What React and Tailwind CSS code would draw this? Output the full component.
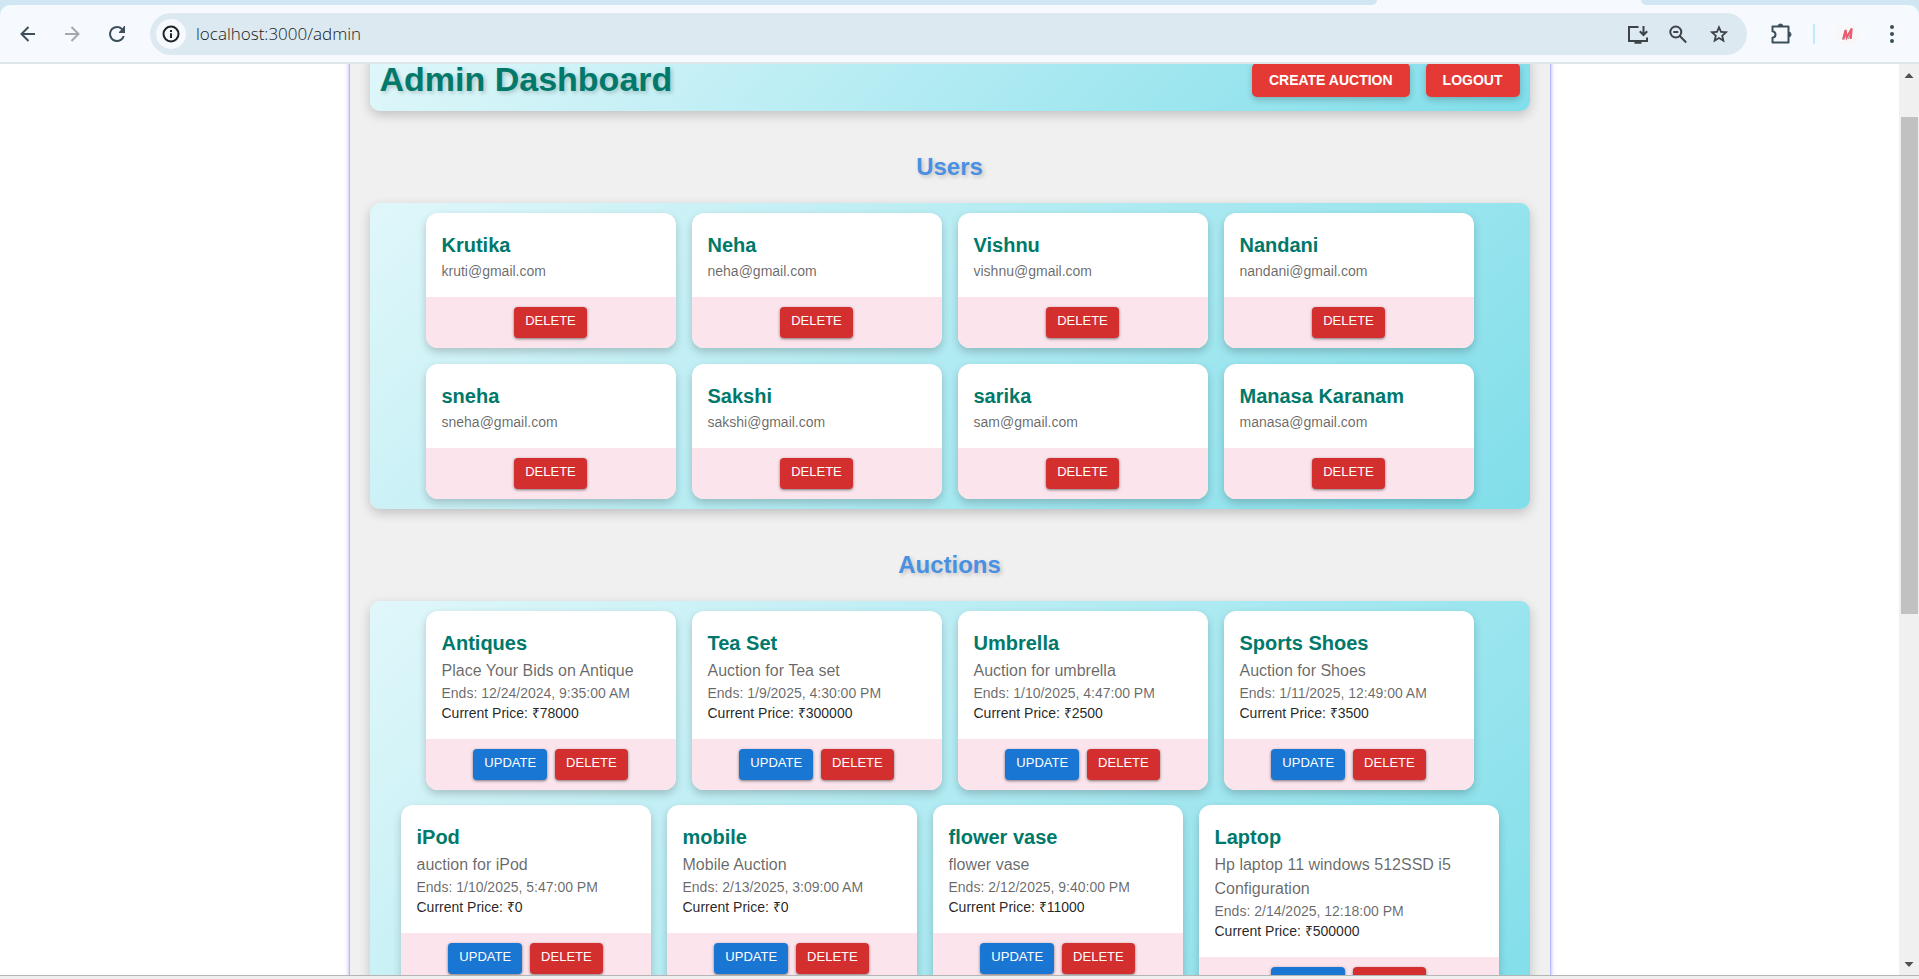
import React from "react";

const users = [
  ["Krutika", "kruti@gmail.com"],
  ["Neha", "neha@gmail.com"],
  ["Vishnu", "vishnu@gmail.com"],
  ["Nandani", "nandani@gmail.com"],
  ["sneha", "sneha@gmail.com"],
  ["Sakshi", "sakshi@gmail.com"],
  ["sarika", "sam@gmail.com"],
  ["Manasa Karanam", "manasa@gmail.com"],
];

const auctions = [
  ["Antiques", "Place Your Bids on Antique", "12/24/2024, 9:35:00 AM", 78000],
  ["Tea Set", "Auction for Tea set", "1/9/2025, 4:30:00 PM", 300000],
  ["Umbrella", "Auction for umbrella", "1/10/2025, 4:47:00 PM", 2500],
  ["Sports Shoes", "Auction for Shoes", "1/11/2025, 12:49:00 AM", 3500],
  ["iPod", "auction for iPod", "1/10/2025, 5:47:00 PM", 0],
  ["mobile", "Mobile Auction", "2/13/2025, 3:09:00 AM", 0],
  ["flower vase", "flower vase", "2/12/2025, 9:40:00 PM", 11000],
  ["Laptop", "Hp laptop 11 windows 512SSD i5 Configuration", "2/14/2025, 12:18:00 PM", 500000],
];

function IconButton({ label, className = "", children }) {
  return (
    <button type="button" aria-label={label} className={`flex shrink-0 items-center justify-center ${className}`}>
      {children}
    </button>
  );
}

function BrowserBar() {
  return (
    <header className="shrink-0 bg-[#d1e6f3]">
      <div className="flex h-[5px]">
        <div className="flex-1 bg-[#f6f9fe]">
          <div className="h-full rounded-br-[12px] bg-[#d1e6f3]" />
        </div>
        <div className="w-[264px] bg-[#f6f9fe]" />
        <div className="w-[278px] bg-[#f6f9fe]">
          <div className="h-full rounded-bl-[12px] bg-[#d1e6f3]" />
        </div>
      </div>
      <div className="flex h-[59px] items-center rounded-t-[10px] border-b-2 border-[#dde5ea] bg-[#f6f9fe] pb-1 pr-[15px] pt-1">
        <div className="flex w-[150px] items-center pl-4 text-[#3c4f5a]">
          <IconButton label="Back" className="size-6">
            <svg viewBox="0 0 24 24" className="size-6" fill="none" stroke="currentColor" strokeWidth="2">
              <path d="M19 12H6M12.500 5 5.500 12l7 7" />
            </svg>
          </IconButton>
          <IconButton label="Forward" className="ml-5 size-6 text-[#a3a8ad]">
            <svg viewBox="0 0 24 24" className="size-6" fill="none" stroke="currentColor" strokeWidth="2">
              <path d="M5 12h13M11.500 5l7 7-7 7" />
            </svg>
          </IconButton>
          <IconButton label="Reload" className="ml-[21px] size-6">
            <svg viewBox="0 0 24 24" className="size-6" fill="currentColor">
              <path d="M17.650 6.350A7.960 7.960 0 0 0 12 4a8 8 0 1 0 7.730 10h-2.080A6 6 0 1 1 12 6c1.660 0 3.140.69 4.220 1.780L14 10v1h6V4h-1z" />
            </svg>
          </IconButton>
        </div>
        <div className="flex h-[42px] flex-1 items-center rounded-full bg-[#dde9f1] pl-[6px] pr-4 text-[#3d4347]">
          <IconButton label="Site information" className="size-[30px] rounded-full bg-[#f6f9fe] text-[#1f2326]">
            <svg viewBox="0 0 20 20" className="size-5" fill="none" stroke="currentColor" strokeWidth="2">
              <circle cx="10" cy="10" r="7.500" />
              <path d="M10 9.300v4.700M10 6v2" />
            </svg>
          </IconButton>
          <input
            aria-label="Address"
            defaultValue="localhost:3000/admin"
            className="ml-[10px] min-w-0 flex-1 bg-transparent font-['Open_Sans',sans-serif] text-[17px] font-light text-[#16191c] outline-none"
          />
          <IconButton label="Install app" className="size-6">
            <svg viewBox="0 0 24 24" className="size-6" fill="none" stroke="currentColor" strokeWidth="2">
              <path d="M12.500 5H3v14h18v-3.500M17.500 4v8.500M13.800 9.300l3.700 3.700 3.700-3.700" strokeLinejoin="miter" />
              <path d="M8.500 20.500h7" strokeWidth="2.500" />
            </svg>
          </IconButton>
          <IconButton label="Zoom" className="ml-4 size-6">
            <svg viewBox="0 0 24 24" className="size-6" fill="none" stroke="currentColor" strokeWidth="2">
              <circle cx="9.800" cy="10" r="5.500" />
              <path d="M13.800 14l6.400 6.500M7.300 10h5" />
            </svg>
          </IconButton>
          <IconButton label="Bookmark" className="ml-[17px] size-6">
            <svg viewBox="0 0 24 24" className="size-6" fill="currentColor">
              <path d="M21.200 9.600l-6.600-.6L12 3 9.400 9l-6.600.6 5 4.300L6.300 20.500 12 17l5.700 3.500-1.500-6.600zM12 15l-3 1.800.8-3.400-2.700-2.300 3.500-.3L12 7.500l1.400 3.300 3.500.3-2.700 2.300.8 3.400z" />
            </svg>
          </IconButton>
        </div>
        <IconButton label="Extensions" className="ml-[22px] size-6 text-[#3c4f5a]">
          <svg viewBox="0 0 24 24" className="size-6" fill="none" stroke="currentColor" strokeWidth="2" strokeLinejoin="round">
            <path d="M3.500 4.500h16v16h-16v-4.700c1.800-.3 3-1.600 3-3.300s-1.200-3-3-3.300z" />
            <path d="M9.200 4a2.300 2 0 0 1 4.600 0zM20 10.200a2 2.300 0 0 1 0 4.600z" fill="currentColor" strokeWidth="1" />
          </svg>
        </IconButton>
        <div className="ml-5 h-5 w-[2px] bg-[#c2e7ff]" />
        <IconButton label="Profile" className="ml-5 size-6 rounded-full bg-[#f8f8f8]">
          <svg viewBox="0 0 24 24" className="size-6" fill="none" strokeWidth="2">
            <path d="M7.500 17.500l2.500-9M13.500 17l3.500-9.500" stroke="#8d8d92" strokeWidth="1" />
            <path d="M8.500 17.500l2.200-9.500 1 7.500 5-9-.9 10.500" stroke="#ec5a72" />
          </svg>
        </IconButton>
        <IconButton label="Menu" className="ml-[21px] size-6 text-[#3c4f5a]">
          <svg viewBox="0 0 24 24" className="size-6" fill="currentColor">
            <circle cx="12" cy="5" r="2" />
            <circle cx="12" cy="12" r="2" />
            <circle cx="12" cy="19" r="2" />
          </svg>
        </IconButton>
      </div>
    </header>
  );
}

function HeaderButton({ children }) {
  return (
    <button
      type="button"
      className="h-[34px] rounded-[5px] bg-[#e53935] px-[17px] text-[14px] font-bold text-white shadow-[0_3px_6px_rgba(0,0,0,0.2)]"
    >
      {children}
    </button>
  );
}

function ActionButton({ tone, children }) {
  const colour = tone === "update" ? "bg-[#1976d2]" : "bg-[#d32f2f]";
  return (
    <button
      type="button"
      className={`h-[31px] rounded-[4px] px-[11px] pb-[3px] text-[13px] text-white shadow-[0_1px_3px_rgba(0,0,0,0.5)] ${colour}`}
    >
      {children}
    </button>
  );
}

function Card({ title, children, actions }) {
  return (
    <article className="min-w-[250px] max-w-[300px] overflow-hidden rounded-[12px] bg-white shadow-[0_4px_8px_rgba(0,0,0,0.2)]">
      <div className="p-4 text-[14px] leading-5 text-black/60">
        <h3 className="text-[20px] font-bold leading-8 text-[#00796b]">{title}</h3>
        {children}
      </div>
      <div className="flex justify-center gap-2 bg-[#fce4ec] p-[10px]">{actions}</div>
    </article>
  );
}

function Section({ title, gap, children }) {
  return (
    <section>
      <h2 className="mb-5 mt-10 text-center text-[24px] font-bold leading-8 text-[#4a90e2] [text-shadow:2px_2px_4px_rgba(0,0,0,0.2)]">
        {title}
      </h2>
      <div
        className={`flex flex-wrap items-start justify-center rounded-[10px] bg-[linear-gradient(135deg,#e0f7fa,#80deea)] p-[10px] shadow-[0_4px_12px_rgba(0,0,0,0.2)] ${gap}`}
      >
        {children}
      </div>
    </section>
  );
}

function Dashboard() {
  return (
    <main className="mx-auto w-full max-w-[1202px] border-x border-[#b8b8ff] bg-[#f0f0f0] px-5 shadow-[0_0_4px_rgba(100,80,255,0.5)]">
      <header className="-mt-[13px] flex items-end justify-between rounded-[10px] bg-[linear-gradient(135deg,#e0f7fa,#80deea)] px-[10px] pb-[14px] pt-[10px] shadow-[0_4px_12px_rgba(0,0,0,0.2)]">
        <h1 className="text-[34px] font-bold leading-9 text-[#00796b] [text-shadow:2px_2px_4px_rgba(0,0,0,0.2)]">
          Admin Dashboard
        </h1>
        <div className="flex gap-4">
          <HeaderButton>CREATE AUCTION</HeaderButton>
          <HeaderButton>LOGOUT</HeaderButton>
        </div>
      </header>
      <Section title="Users" gap="gap-4">
        {users.map(([name, email]) => (
          <Card key={email} title={name} actions={<ActionButton tone="delete">DELETE</ActionButton>}>
            <p>{email}</p>
          </Card>
        ))}
      </Section>
      <Section title="Auctions" gap="gap-x-4 gap-y-[15px]">
        {auctions.map(([name, description, ends, price]) => (
          <Card
            key={name}
            title={name}
            actions={
              <>
                <ActionButton tone="update">UPDATE</ActionButton>
                <ActionButton tone="delete">DELETE</ActionButton>
              </>
            }
          >
            <p className="text-[16px] leading-6">{description}</p>
            <p>Ends: {ends}</p>
            <p className="text-black/87">Current Price: ₹{price}</p>
          </Card>
        ))}
      </Section>
    </main>
  );
}

function ScrollBar() {
  return (
    <div aria-hidden="true" className="flex w-5 shrink-0 flex-col items-center bg-[#f0f0f0]">
      <svg viewBox="0 0 20 20" className="h-[53px] w-5 shrink-0 pb-[33px]" fill="#505050">
        <path d="M5.500 14h9L10 9z" />
      </svg>
      <div className="w-[17px] flex-[497] bg-[#c1c1c1]" />
      <div className="flex-[341]" />
      <svg viewBox="0 0 20 20" className="size-5 shrink-0" fill="#505050">
        <path d="M5.500 7h9L10 12z" />
      </svg>
    </div>
  );
}

export default function App() {
  return (
    <div className="flex h-screen flex-col bg-[#efefef] font-['Liberation_Sans',Arial,sans-serif]">
      <BrowserBar />
      <div className="flex min-h-0 flex-1 bg-white">
        <div className="flex-1 overflow-hidden">
          <Dashboard />
        </div>
        <ScrollBar />
      </div>
      <footer className="h-1 shrink-0 border-t border-[#b5b5b5]" />
    </div>
  );
}
